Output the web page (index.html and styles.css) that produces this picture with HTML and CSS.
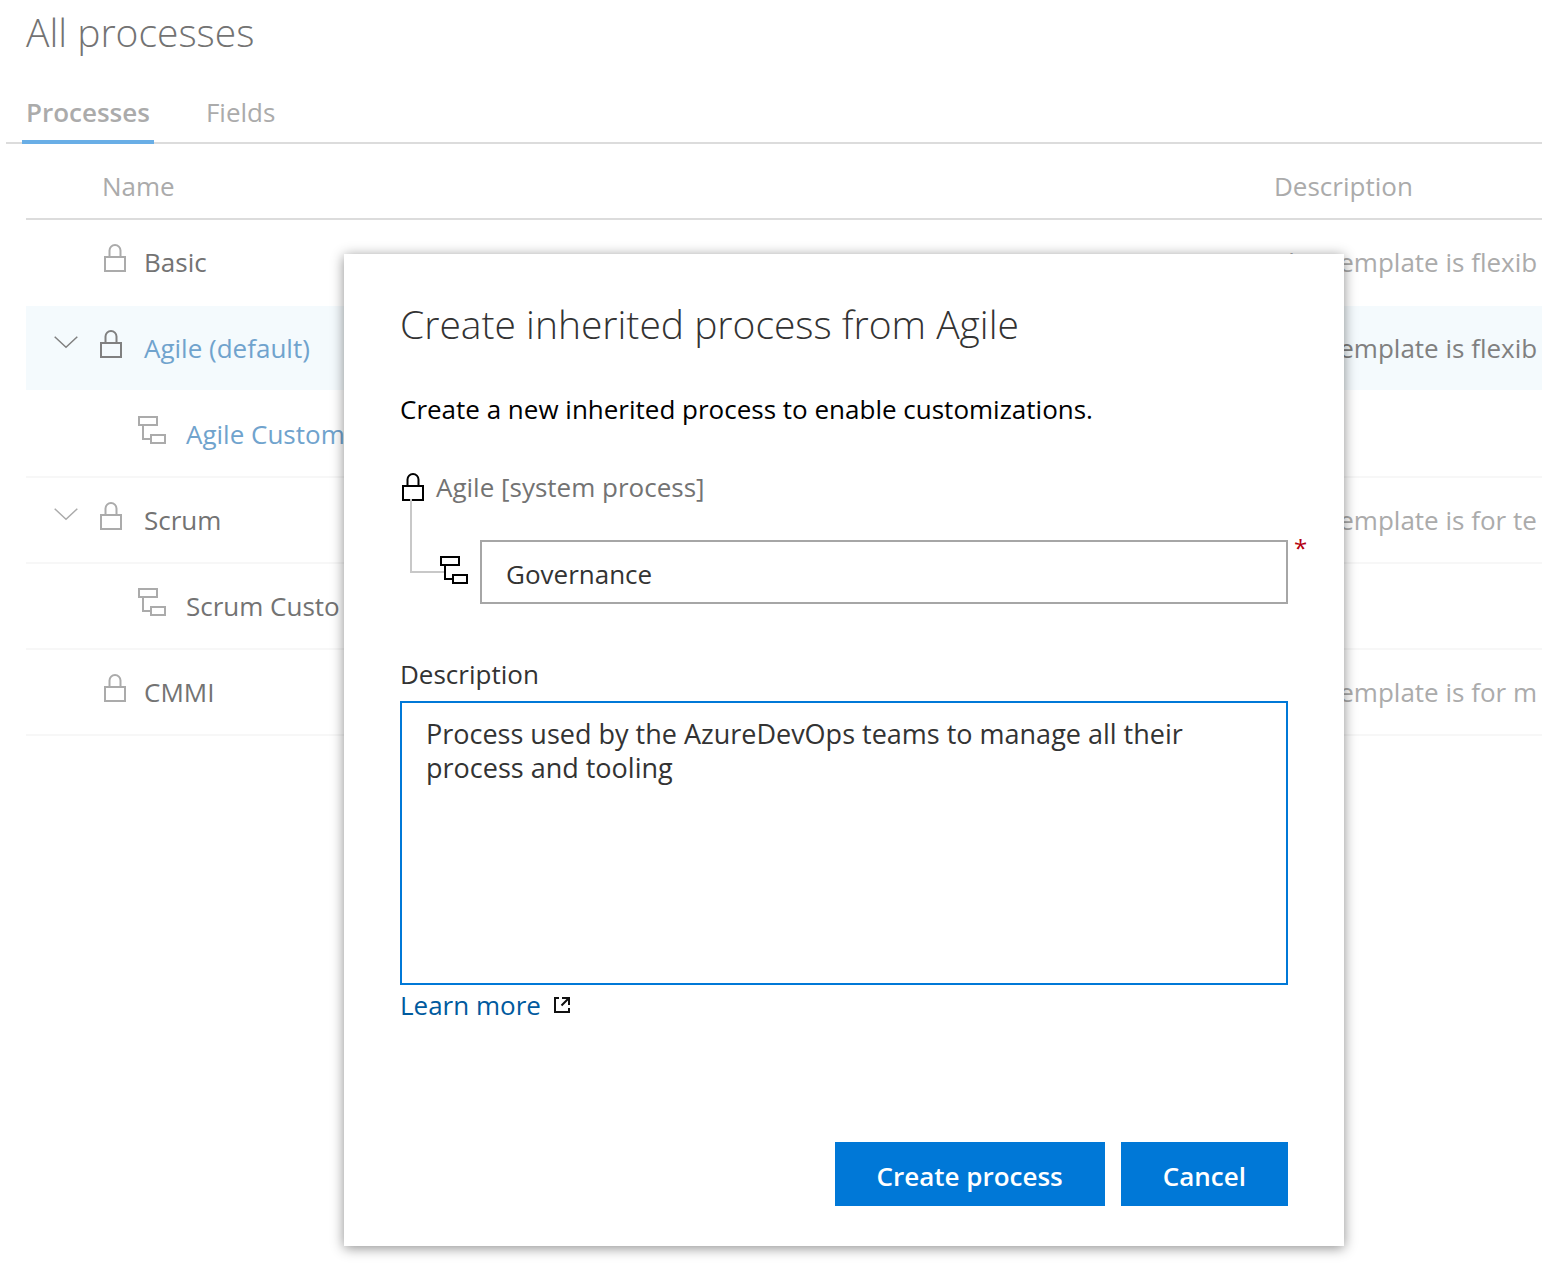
FILE: index.html
```html
<!DOCTYPE html>
<html lang="en">
<head>
<meta charset="utf-8">
<meta name="viewport" content="width=device-width, initial-scale=1">
<title>All processes</title>
<link rel="stylesheet" href="styles.css">
</head>
<body>
<svg class="sprite" aria-hidden="true">
  <symbol id="lock" viewBox="0 0 22 28"><path d="M1 13h20v14H1zM5.500 12V6.500a5.500 5.500 0 0 1 11 0V12" fill="none" stroke="currentColor" stroke-width="2"/></symbol>
  <symbol id="tree" viewBox="0 0 28 28"><path d="M1 1h18v8H1zM13 19h14v8H13zM5 9v14h8" fill="none" stroke="currentColor" stroke-width="2"/></symbol>
  <symbol id="chevron" viewBox="0 0 24 22"><path d="M.7.7 12 11.300 23.300.7" fill="none" stroke="currentColor" stroke-width="1.500"/></symbol>
  <symbol id="external" viewBox="0 0 18 18"><path d="M6 2H2v14h14v-4M9 2h7v7M16 2 8.500 9.500" fill="none" stroke="currentColor" stroke-width="2"/></symbol>
</svg>

<main class="page">
  <h1 class="page-title">All processes</h1>
  <nav class="tabs">
    <a class="tab tab-active" href="#processes">Processes</a>
    <a class="tab" href="#fields">Fields</a>
  </nav>
  <table class="grid">
    <colgroup><col class="col-name"><col></colgroup>
    <thead>
      <tr><th class="head-name">Name</th><th>Description</th></tr>
    </thead>
    <tbody>
      <tr class="plain">
        <td><div class="name leaf"><svg class="lock"><use href="#lock"/></svg><span>Basic</span></div></td>
        <td>This template is flexib</td>
      </tr>
      <tr class="selected">
        <td><div class="name parent"><button class="toggle" type="button" aria-label="Collapse Agile"><svg class="chevron"><use href="#chevron"/></svg></button><svg class="lock"><use href="#lock"/></svg><a href="#agile">Agile (default)</a></div></td>
        <td>This template is flexib</td>
      </tr>
      <tr>
        <td><div class="name child"><svg class="tree"><use href="#tree"/></svg><a href="#agile-custom">Agile Custom</a></div></td>
        <td></td>
      </tr>
      <tr>
        <td><div class="name parent"><button class="toggle" type="button" aria-label="Collapse Scrum"><svg class="chevron"><use href="#chevron"/></svg></button><svg class="lock"><use href="#lock"/></svg><span>Scrum</span></div></td>
        <td>This template is for te</td>
      </tr>
      <tr>
        <td><div class="name child"><svg class="tree"><use href="#tree"/></svg><span>Scrum Custo</span></div></td>
        <td></td>
      </tr>
      <tr>
        <td><div class="name leaf"><svg class="lock"><use href="#lock"/></svg><span>CMMI</span></div></td>
        <td>This template is for m</td>
      </tr>
    </tbody>
  </table>
</main>

<form class="dialog" role="dialog" aria-labelledby="dialog-title">
  <h2 class="dialog-title" id="dialog-title">Create inherited process from Agile</h2>
  <p class="intro">Create a new inherited process to enable customizations.</p>
  <div class="hierarchy">
    <div class="source"><svg class="lock"><use href="#lock"/></svg><label for="process-name">Agile [system process]</label></div>
    <div class="derived">
      <svg class="tree"><use href="#tree"/></svg>
      <div class="field"><input class="text-input" id="process-name" type="text" value="Governance" required><span class="required">*</span></div>
    </div>
  </div>
  <label class="label" for="description">Description</label>
  <textarea class="text-area" id="description">Process used by the AzureDevOps teams to manage all their process and tooling</textarea>
  <div class="more"><a href="#learn-more">Learn more</a><svg class="external"><use href="#external"/></svg></div>
  <div class="actions">
    <button class="button" type="button">Create process</button>
    <button class="button" type="button">Cancel</button>
  </div>
</form>
</body>
</html>
```
FILE: styles.css
```css
* { box-sizing: border-box; }

body {
  margin: 0;
  background: #fff;
  color: #737373;
  font: 26px/36px "Open Sans", "Noto Sans", sans-serif;
  overflow-x: hidden;
}

a { text-decoration: none; }
button, input, textarea { font: inherit; }

.sprite { position: absolute; width: 0; height: 0; }
.lock { width: 22px; height: 28px; flex: none; }
.tree { width: 28px; height: 28px; flex: none; }
.chevron { display: block; width: 24px; height: 22px; }
.external { width: 18px; height: 18px; color: #111; }

.page { overflow: hidden; }

.page-title {
  margin: 0;
  padding: 8px 26px 0;
  font-size: 39px;
  line-height: 48px;
  font-weight: 300;
}

.tabs {
  display: flex;
  gap: 48px;
  margin: 38px 0 0 6px;
  padding-left: 16px;
  border-bottom: 2px solid #dcdcdc;
}

.tab {
  height: 50px;
  margin-bottom: -2px;
  padding: 0 4px;
  color: #ababab;
}

.tab-active { font-weight: 600; border-bottom: 4px solid #69aee6; }

.grid {
  width: calc(100% - 26px);
  margin-left: 26px;
  table-layout: fixed;
  border-spacing: 0;
}

.col-name { width: 1248px; }

.grid th {
  height: 76px;
  padding: 10px 0 0;
  color: #ababab;
  font-weight: 400;
  text-align: left;
  border-bottom: 2px solid #dcdcdc;
}

.grid .head-name { padding-left: 76px; }

.grid td {
  height: 86px;
  padding: 0;
  color: #ababab;
  white-space: nowrap;
  border-bottom: 2px solid #f7f7f7;
}

.grid .plain td, .grid .selected td { border-bottom-color: #fff; }
.grid .selected td { background: #f4fafd; background-clip: padding-box; color: #808080; }

.name { display: flex; align-items: baseline; }
.name span { color: #737373; }
.name a { color: #70a3cd; }
.leaf { gap: 18px; padding-left: 78px; }
.parent { gap: 22px; padding-left: 28px; }
.child { gap: 20px; padding-left: 112px; }

.toggle { padding: 0; border: 0; background: none; color: inherit; }

.dialog {
  position: absolute;
  top: 254px;
  left: 344px;
  width: 1000px;
  padding: 46px 56px 40px;
  background: #fff;
  color: #333;
  box-shadow: 0 2px 12px rgba(0, 0, 0, .45);
}

.dialog-title { margin: 0 0 43px; font-size: 39px; line-height: 48px; font-weight: 300; }
.intro { margin: 0 0 42px; color: #000; }

.hierarchy { position: relative; margin-bottom: 52px; color: #000; }

/* Connector from the system process to the inherited one */
.hierarchy::before {
  content: "";
  position: absolute;
  top: 30px;
  left: 10px;
  width: 34px;
  height: 72px;
  border: solid #c8c8c8;
  border-width: 0 0 2px 2px;
}

.source { display: flex; align-items: center; gap: 12px; margin-bottom: 35px; padding-left: 2px; }
.source label { color: #737373; }

.derived { position: relative; display: flex; align-items: center; gap: 12px; padding-left: 40px; }
.derived .tree { margin-bottom: 4px; }
.field { position: relative; flex: 1; display: flex; }

.text-input {
  width: 100%;
  height: 64px;
  padding: 4px 24px 0;
  border: 2px solid #a6a6a6;
  background: #fff;
  color: #333;
  outline: 0;
}

.required { position: absolute; top: 0; left: 100%; padding-left: 6px; color: #b4000f; font-size: 24px; line-height: 16px; }

.label { display: block; margin-bottom: 9px; }

.text-area {
  display: block;
  width: 100%;
  height: 284px;
  padding: 14px 24px;
  border: 2px solid #0078d7;
  color: #333;
  font-size: 27px;
  line-height: 34px;
  outline: 0;
  resize: none;
}

.more { display: flex; align-items: center; gap: 12px; margin-top: 2px; }
.more a { color: #005a9e; }

.actions { display: flex; justify-content: flex-end; gap: 16px; margin-top: 119px; }

.button {
  height: 64px;
  padding: 4px 42px 0;
  border: 0;
  background: #0078d7;
  color: #fff;
  font-weight: 600;
}
```
